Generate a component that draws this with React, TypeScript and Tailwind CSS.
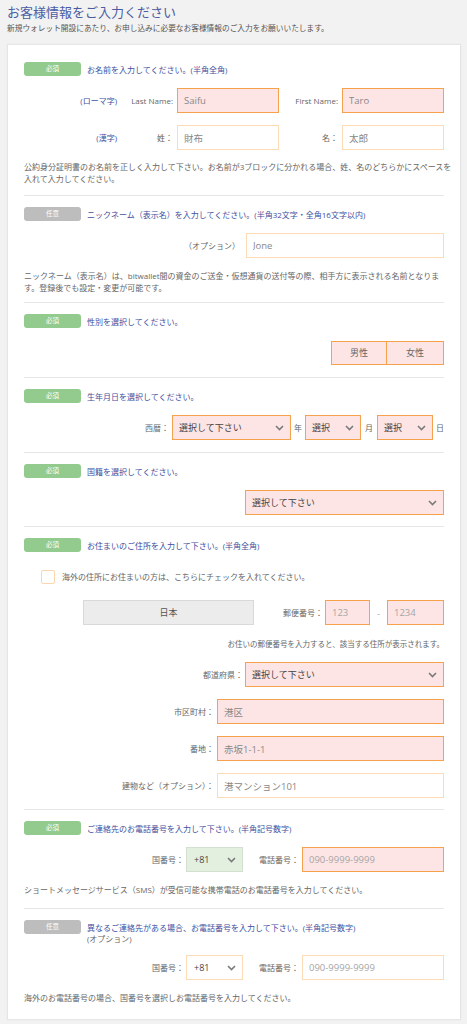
import React from "react";

const STRONG = "border-[#f6a24c] bg-[#fde5e5]";
const LIGHT = "border-[#fddbb5] bg-white";
const GREEN = "border-[#d3dfd0] bg-[#e3f0e0]";

function Badge({ required }: { required?: boolean }) {
  return (
    <span
      className={`flex h-[14px] w-[57px] shrink-0 items-center justify-center rounded-[3px] text-[6.5px] leading-none text-white ${
        required ? "bg-[#93cb8f]" : "bg-[#bdbdbd]"
      }`}
    >
      {required ? "必須" : "任意"}
    </span>
  );
}

function Head({ required, children }: { required?: boolean; children: React.ReactNode }) {
  return (
    <div className="flex items-start gap-[6px]">
      <Badge required={required} />
      <div className="pt-[1.5px] text-[8px] leading-[11px] text-[#3e4f9f]">{children}</div>
    </div>
  );
}

function Field({
  value,
  placeholder,
  strong,
  className = "",
}: {
  value?: string;
  placeholder?: string;
  strong?: boolean;
  className?: string;
}) {
  return (
    <input
      readOnly
      defaultValue={value}
      placeholder={placeholder}
      className={`h-[25px] shrink-0 border px-[6px] text-[9.5px] text-[#888] outline-none placeholder:text-[#a5a5a5] ${
        strong ? STRONG : LIGHT
      } ${className}`}
    />
  );
}

function Chevron() {
  return (
    <svg width="9" height="6" viewBox="0 0 9 6" className="shrink-0">
      <polyline points="1,1 4.5,4.5 8,1" fill="none" stroke="#7a7a7a" strokeWidth="1.6" />
    </svg>
  );
}

function Select({
  text,
  tone,
  className = "",
}: {
  text: string;
  tone: "strong" | "light" | "green";
  className?: string;
}) {
  const t = tone === "strong" ? STRONG : tone === "green" ? GREEN : LIGHT;
  return (
    <div
      className={`flex h-[25px] shrink-0 items-center justify-between border pl-[6px] pr-[6px] text-[9px] text-[#444] ${t} ${className}`}
    >
      <span>{text}</span>
      <Chevron />
    </div>
  );
}

function Divider({ className = "" }: { className?: string }) {
  return <div className={`h-px bg-[#e6e6e6] ${className}`} />;
}

function Label({ children, className = "" }: { children: React.ReactNode; className?: string }) {
  return <span className={`shrink-0 text-[8px] text-[#666] ${className}`}>{children}</span>;
}

export default function App() {
  return (
    <div className="min-h-[1024px] bg-[#f2f2f2] pt-[4px] pb-[6px] font-['Open_Sans','Noto_Sans_CJK_JP',sans-serif]">
      <div className="px-[7px]">
        <h1 className="text-[13px] leading-[16px] text-[#4a5ca3]">お客様情報をご入力ください</h1>
        <p className="mt-[2px] text-[7.7px] leading-[12px] text-[#555]">
          新規ウォレット開設にあたり、お申し込みに必要なお客様情報のご入力をお願いいたします。
        </p>
      </div>

      <div className="ml-[7px] mt-[10px] w-[454px] border border-[#e6e6e6] bg-white px-[16px] pt-[17px] pb-[15px] shadow-[0_0_2px_rgba(0,0,0,0.04)]">
        {/* name */}
        <Head required>お名前を入力してください。(半角全角)</Head>
        <div className="mt-[12px] flex items-center">
          <span className="w-[93px] text-right text-[8px] text-[#3e4f9f]">(ローマ字)</span>
          <Label className="w-[56px] text-right">Last Name:</Label>
          <Field value="Saifu" strong className="ml-[4px] w-[102px]" />
          <Label className="w-[59px] text-right">First Name:</Label>
          <Field value="Taro" strong className="ml-[4px] w-[102px]" />
        </div>
        <div className="mt-[12px] flex items-center">
          <span className="w-[93px] text-right text-[8px] text-[#3e4f9f]">(漢字)</span>
          <Label className="w-[56px] text-right">姓：</Label>
          <Field value="財布" className="ml-[4px] w-[102px]" />
          <Label className="w-[59px] text-right">名：</Label>
          <Field value="太郎" className="ml-[4px] w-[102px]" />
        </div>
        <div className="mt-[10.5px] text-[8px] leading-[12px] whitespace-nowrap text-[#666]">
          <div>公約身分証明書のお名前を正しく入力して下さい。お名前が3ブロックに分かれる場合、姓、名のどちらかにスペースを</div>
          <div>入れて入力してください。</div>
        </div>
        <Divider className="mt-[10.5px]" />

        {/* nickname */}
        <div className="mt-[11px]">
          <Head>ニックネーム（表示名）を入力してください。(半角32文字・全角16文字以内)</Head>
        </div>
        <div className="mt-[12px] flex items-center justify-end">
          <Label>（オプション）</Label>
          <Field value="Jone" className="ml-[6px] w-[198px]" />
        </div>
        <div className="mt-[11.5px] text-[8px] leading-[12px] whitespace-nowrap text-[#666]">
          <div>ニックネーム（表示名）は、bitwallet間の資金のご送金・仮想通貨の送付等の際、相手方に表示される名前となりま</div>
          <div>す。登録後でも設定・変更が可能です。</div>
        </div>
        <Divider className="mt-[8.5px]" />

        {/* gender */}
        <div className="mt-[11px]">
          <Head required>性別を選択してください。</Head>
        </div>
        <div className="mt-[13px] flex justify-end">
          <button className={`h-[24px] w-[56px] border text-[9px] text-[#666] ${STRONG}`}>男性</button>
          <button className={`h-[24px] w-[57px] border border-l-0 text-[9px] text-[#666] ${STRONG}`}>女性</button>
        </div>
        <Divider className="mt-[12px]" />

        {/* birthday */}
        <div className="mt-[11px]">
          <Head required>生年月日を選択してください。</Head>
        </div>
        <div className="mt-[12px] flex items-center justify-end">
          <Label>西暦：</Label>
          <Select text="選択して下さい" tone="strong" className="ml-[3px] w-[119px]" />
          <Label className="ml-[3px]">年</Label>
          <Select text="選択" tone="strong" className="ml-[3px] w-[56px]" />
          <Label className="ml-[4px]">月</Label>
          <Select text="選択" tone="strong" className="ml-[4px] w-[56px]" />
          <Label className="ml-[3px]">日</Label>
        </div>
        <Divider className="mt-[12px]" />

        {/* nationality */}
        <div className="mt-[11px]">
          <Head required>国籍を選択してください。</Head>
        </div>
        <div className="mt-[12px] flex justify-end">
          <Select text="選択して下さい" tone="strong" className="w-[199px]" />
        </div>
        <Divider className="mt-[11px]" />

        {/* address */}
        <div className="mt-[11px]">
          <Head required>お住まいのご住所を入力して下さい。(半角全角)</Head>
        </div>
        <div className="mt-[18px] ml-[17px] flex items-center">
          <span className="h-[14px] w-[14px] shrink-0 rounded-[2px] border border-[#fdd6ae] bg-white" />
          <Label className="ml-[7px]">海外の住所にお住まいの方は、こちらにチェックを入れてください。</Label>
        </div>
        <div className="mt-[16px] flex items-center">
          <div className="ml-[59px] flex h-[25px] w-[171px] shrink-0 items-center justify-center border border-[#d9d9d9] bg-[#ececec] text-[9px] text-[#555]">
            日本
          </div>
          <div className="flex-1" />
          <Label>郵便番号：</Label>
          <Field placeholder="123" strong className="ml-[2px] w-[45px]" />
          <span className="w-[17px] text-center text-[8px] text-[#888]">-</span>
          <Field placeholder="1234" strong className="w-[57px]" />
        </div>
        <div className="mt-[12.5px] text-right text-[7.5px] leading-[12px] text-[#666]">
          お住いの郵便番号を入力すると、該当する住所が表示されます。
        </div>
        <div className="mt-[12.5px] flex items-center justify-end">
          <Label>都道府県：</Label>
          <Select text="選択して下さい" tone="strong" className="ml-[2px] w-[199px]" />
        </div>
        <div className="mt-[12px] flex items-center justify-end">
          <Label>市区町村：</Label>
          <Field value="港区" strong className="ml-[3px] w-[227px]" />
        </div>
        <div className="mt-[12px] flex items-center justify-end">
          <Label>番地：</Label>
          <Field value="赤坂1-1-1" strong className="ml-[3px] w-[227px]" />
        </div>
        <div className="mt-[12px] flex items-center justify-end">
          <Label>建物など（オプション）：</Label>
          <Field value="港マンション101" className="ml-[3px] w-[227px]" />
        </div>
        <Divider className="mt-[11px]" />

        {/* phone */}
        <div className="mt-[11px]">
          <Head required>ご連絡先のお電話番号を入力して下さい。(半角記号数字)</Head>
        </div>
        <div className="mt-[12px] flex items-center justify-end">
          <Label>国番号：</Label>
          <Select text="+81" tone="green" className="ml-[2px] w-[57px] pl-[7px] pr-[6px] text-[9.5px]" />
          <Label className="ml-[16px]">電話番号：</Label>
          <Field placeholder="090-9999-9999" strong className="ml-[3px] w-[142px]" />
        </div>
        <div className="mt-[11.5px] text-[8px] leading-[12px] text-[#666]">
          ショートメッセージサービス（SMS）が受信可能な携帯電話のお電話番号を入力してください。
        </div>
        <Divider className="mt-[12.5px]" />

        {/* second phone */}
        <div className="mt-[11px]">
          <Head>
            異なるご連絡先がある場合、お電話番号を入力して下さい。(半角記号数字)
            <br />
            <span className="text-[#666]">(オプション)</span>
          </Head>
        </div>
        <div className="mt-[11.5px] flex items-center justify-end">
          <Label>国番号：</Label>
          <Select text="+81" tone="light" className="ml-[2px] w-[57px] pl-[7px] pr-[6px] text-[9.5px]" />
          <Label className="ml-[16px]">電話番号：</Label>
          <Field placeholder="090-9999-9999" className="ml-[3px] w-[142px]" />
        </div>
        <div className="mt-[11.5px] text-[8px] leading-[12px] text-[#666]">
          海外のお電話番号の場合、国番号を選択しお電話番号を入力してください。
        </div>
      </div>
    </div>
  );
}
